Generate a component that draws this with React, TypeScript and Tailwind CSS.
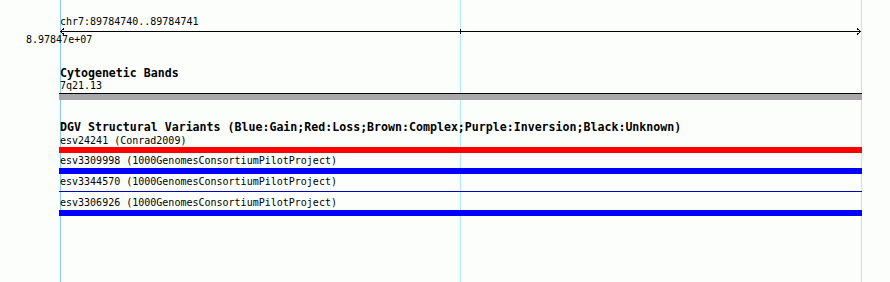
const mono = "font-['DejaVu_Sans_Mono',monospace]";

const variants = [
  { label: 'esv24241 (Conrad2009)', kind: 'bar', color: 'bg-[#ff0000]', gap: 'mt-px', after: 'mt-0' },
  { label: 'esv3309998 (1000GenomesConsortiumPilotProject)', kind: 'bar', color: 'bg-[#0000ff]', gap: 'mt-px', after: 'mt-px' },
  { label: 'esv3344570 (1000GenomesConsortiumPilotProject)', kind: 'line', color: 'bg-[#0000c8]', gap: 'mt-px', after: 'mt-[3px]' },
  { label: 'esv3306926 (1000GenomesConsortiumPilotProject)', kind: 'bar', color: 'bg-[#0000ff]', gap: 'mt-[4px]', after: 'mt-px' },
];

function Ruler() {
  return (
    <svg width="810" height="8" className="-ml-[4px] block" shapeRendering="crispEdges">
      <line x1="4" y1="3.5" x2="805" y2="3.5" stroke="#000" strokeWidth="1" />
      <polyline points="8,0.5 4.5,3.5 8,6.5" fill="none" stroke="#000" strokeWidth="1" />
      <polyline points="801,0.5 804.5,3.5 801,6.5" fill="none" stroke="#000" strokeWidth="1" />
      <line x1="404.5" y1="1" x2="404.5" y2="6" stroke="#000" strokeWidth="1" />
    </svg>
  );
}

export default function App() {
  return (
    <div className="relative w-[890px] h-[282px] overflow-hidden bg-[#fcfefc] text-black">
      <div className="absolute top-0 bottom-0 left-[60px] w-px bg-[#87cdf2]" />
      <div className="absolute top-0 bottom-0 left-[460px] w-px bg-[#aeeef0]" />
      <div className="absolute top-0 bottom-0 left-[861px] w-px bg-[#aeeef0]" />

      <div className={`relative pl-[60px] pt-[16px] ${mono}`}>
        <div className="h-[12px] text-[10px] leading-[12px] whitespace-pre">chr7:89784740..89784741</div>
        <Ruler />
        <div className="-ml-[34px] h-[8px] text-[10px] leading-[8px] whitespace-pre">8.97847e+07</div>

        <div className="mt-[23px] h-[12px] text-[11.6px] font-bold leading-[12px] whitespace-pre">Cytogenetic Bands</div>
        <div className="h-[13px] text-[10px] leading-[13px] whitespace-pre">7q21.13</div>
        <div className="mt-px -ml-px w-[803px]">
          <div className="h-px bg-black" />
          <div className="h-[6px] bg-[#aaa7aa]" />
        </div>

        <div className="mt-[21px] h-[12px] text-[11.6px] font-bold leading-[12px] whitespace-pre">
          DGV Structural Variants (Blue:Gain;Red:Loss;Brown:Complex;Purple:Inversion;Black:Unknown)
        </div>
        {variants.map((v) => (
          <div key={v.label}>
            <div className={`${v.gap} h-[13px] text-[10px] leading-[13px] whitespace-pre`}>{v.label}</div>
            {v.kind === 'bar' ? (
              <div className={`${v.after} -ml-px w-[803px] h-[6px] ${v.color}`} />
            ) : (
              <div className={`${v.after} -ml-px w-[803px] h-px ${v.color}`} />
            )}
          </div>
        ))}
      </div>
    </div>
  );
}
